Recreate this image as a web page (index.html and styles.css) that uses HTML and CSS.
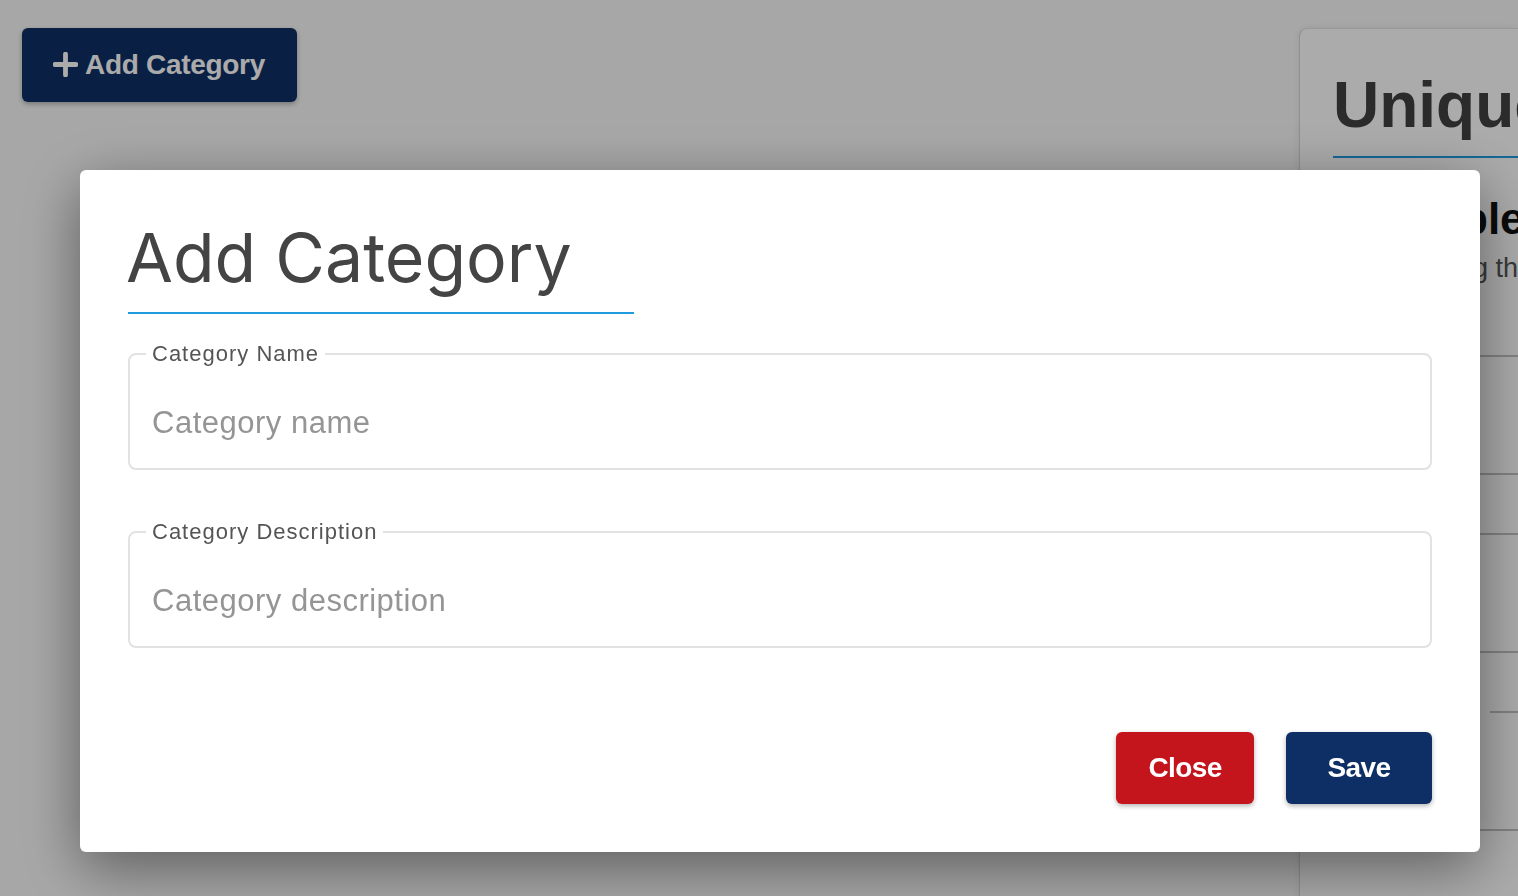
FILE: index.html
```html
<!DOCTYPE html>
<html lang="en">
<head>
    <meta charset="UTF-8">
    <meta name="viewport" content="width=device-width, initial-scale=1.0">
    <title>Categories</title>
    <link rel="stylesheet" href="styles.css">
</head>
<body>
    <div class="page">
        <div class="toolbar">
            <button class="add-button">
                <svg class="plus-icon" viewBox="0 0 24 24" width="25" height="25">
                    <path d="M12 2v20M2 12h20" stroke="currentColor" stroke-width="4.6" stroke-linecap="round" fill="none"/>
                </svg>
                Add Category
            </button>
        </div>

        <section class="card">
            <h1 class="card-title">Unique Variables</h1>
            <h2 class="card-subtitle">Available Tables</h2>
            <p class="card-text">Tables using the list below</p>
            <div class="rows">
                <div class="row tall"></div>
                <div class="row short"></div>
                <div class="row tall"></div>
                <div class="row short"></div>
                <div class="row tall indent"></div>
                <div class="row tall"></div>
            </div>
        </section>
    </div>

    <div class="backdrop">
        <div class="modal">
            <h2 class="modal-title">Add Category</h2>

            <form class="modal-form" onsubmit="return false">
                <fieldset class="field">
                    <legend>Category Name</legend>
                    <input type="text" class="field-input" placeholder="Category name">
                </fieldset>

                <fieldset class="field">
                    <legend>Category Description</legend>
                    <input type="text" class="field-input" placeholder="Category description">
                </fieldset>

                <div class="modal-actions">
                    <button type="button" class="btn btn-close">Close</button>
                    <button type="submit" class="btn btn-save">Save</button>
                </div>
            </form>
        </div>
    </div>
</body>
</html>
```

FILE: styles.css
```css
body {
    margin: 0;
    font-family: "Liberation Sans", Arial, sans-serif;
    background-color: #fafafa;
    overflow: hidden;
}

.page {
    display: flex;
    height: 100vh;
    padding: 28px 0 0 22px;
    box-sizing: border-box;
}

.toolbar {
    flex: 1;
}

.add-button {
    display: flex;
    align-items: center;
    gap: 7px;
    height: 74px;
    padding: 0 32px 0 31px;
    background-color: #0e2f65;
    color: #ffffff;
    border: none;
    border-radius: 6px;
    font-family: "Liberation Sans", Arial, sans-serif;
    font-size: 28px;
    font-weight: bold;
    letter-spacing: -0.3px;
    box-shadow: 0 2px 5px rgba(0, 0, 0, 0.3);
    cursor: pointer;
}

.plus-icon {
    margin-top: -2px;
}

.card {
    flex: 0 0 219px;
    min-height: 900px;
    padding: 39px 0 0 33px;
    box-sizing: border-box;
    overflow: hidden;
    background-color: #ffffff;
    border-left: 1px solid #d6d6d6;
    border-top: 1px solid #e4e4e4;
    border-radius: 8px 0 0 0;
    box-shadow: 0 0 8px rgba(0, 0, 0, 0.08);
}

.card-title {
    margin: 0;
    padding-bottom: 14px;
    font-size: 64px;
    font-weight: bold;
    color: #404040;
    white-space: nowrap;
    border-bottom: 2px solid #1f9be0;
}

.card-subtitle {
    margin: 36px 0 0;
    font-size: 44px;
    font-weight: bold;
    color: #111111;
    white-space: nowrap;
}

.card-text {
    margin: 9px 0 0 5px;
    font-size: 27px;
    color: #555555;
    white-space: nowrap;
}

.rows {
    margin-top: 71px;
    margin-left: -33px;
}

.row {
    border-top: 2px solid #c2c2c2;
}

.row.tall {
    height: 116px;
}

.row.short {
    height: 58px;
}

.row.indent {
    margin-left: 190px;
}

.backdrop {
    position: fixed;
    inset: 0;
    display: flex;
    align-items: flex-start;
    padding: 170px 0 0 80px;
    background-color: rgba(0, 0, 0, 0.33);
}

.modal {
    flex: 0 0 1400px;
    padding: 46px 48px 48px;
    box-sizing: border-box;
    background-color: #ffffff;
    border-radius: 6px;
    box-shadow: 0 16px 60px rgba(0, 0, 0, 0.45);
}

.modal-title {
    display: block;
    width: 506px;
    margin: 0;
    padding-bottom: 14px;
    font-family: Inter, "Liberation Sans", sans-serif;
    font-size: 68px;
    font-weight: 400;
    line-height: normal;
    text-indent: -2px;
    color: #444444;
    border-bottom: 2px solid #1f9be0;
}

.modal-form {
    margin-top: 27px;
}

.field {
    margin: 0 0 49px;
    padding: 0 22px;
    border: 2px solid #e2e2e2;
    border-radius: 8px;
}

.field legend {
    margin-left: -6px;
    padding: 0 6px;
    font-size: 22px;
    letter-spacing: 1px;
    color: #555555;
}

.field-input {
    display: block;
    width: 100%;
    height: 101px;
    padding: 10px 0 0;
    box-sizing: border-box;
    border: none;
    outline: none;
    background: transparent;
    font-family: "Liberation Sans", Arial, sans-serif;
    font-size: 31px;
    letter-spacing: 0.5px;
    color: #333333;
}

.field-input::placeholder {
    color: #959595;
}

.modal-actions {
    display: flex;
    justify-content: flex-end;
    gap: 32px;
    margin-top: 84px;
}

.btn {
    height: 72px;
    border: none;
    border-radius: 6px;
    color: #ffffff;
    font-family: "Liberation Sans", Arial, sans-serif;
    font-size: 28px;
    font-weight: bold;
    letter-spacing: -0.6px;
    box-shadow: 0 2px 5px rgba(0, 0, 0, 0.3);
    cursor: pointer;
}

.btn-close {
    width: 138px;
    background-color: #c4141c;
}

.btn-save {
    width: 146px;
    background-color: #0e2f65;
}
```
